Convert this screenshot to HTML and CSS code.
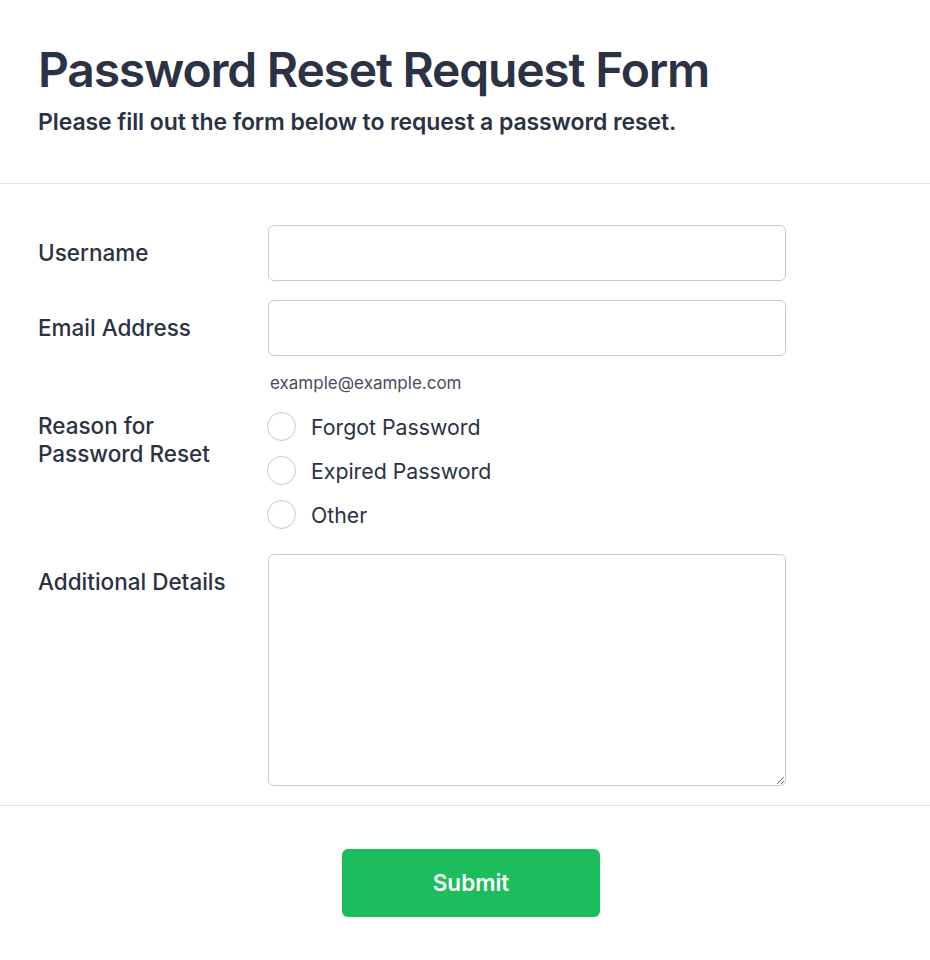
FILE: index.html
```html
<!DOCTYPE html>
<html lang="en">
  <head>
    <meta charset="UTF-8" />
    <meta name="viewport" content="width=device-width, initial-scale=1.0" />
    <title>Password Reset Request</title>
    <link rel="stylesheet" href="styles.css">
  </head>
  <body>
    <header class="form-header">
      <h1>Password Reset Request Form</h1>
      <p>Please fill out the form below to request a password reset.</p>
    </header>

    <form class="reset-form" onsubmit="return false">
      <div class="fields">
        <div class="field">
          <label class="field-label" for="username">Username</label>
          <div class="field-control">
            <input type="text" id="username" name="username" />
          </div>
        </div>

        <div class="field">
          <label class="field-label" for="email">Email Address</label>
          <div class="field-control">
            <input type="email" id="email" name="email" />
            <div class="hint">example@example.com</div>
          </div>
        </div>

        <div class="field radio-field">
          <span class="field-label">Reason for<br />Password Reset</span>
          <div class="field-control radio-list">
            <label class="radio"><input type="radio" name="reason" value="forgot" /> Forgot Password</label>
            <label class="radio"><input type="radio" name="reason" value="expired" /> Expired Password</label>
            <label class="radio"><input type="radio" name="reason" value="other" /> Other</label>
          </div>
        </div>

        <div class="field">
          <label class="field-label" for="details">Additional Details</label>
          <div class="field-control">
            <textarea id="details" name="details"></textarea>
          </div>
        </div>
      </div>

      <div class="form-actions">
        <button type="submit">Submit</button>
      </div>
    </form>
  </body>
</html>
```

FILE: styles.css
```css
body {
  margin: 0;
  font-family: "Inter", "Liberation Sans", sans-serif;
  background-color: #fff;
  color: #2a3243;
}

.form-header {
  padding: 41px 38px 47px;
  border-bottom: 1px solid #e2e3e8;
}

.form-header h1 {
  margin: 0;
  font-size: 48px;
  line-height: 1.2;
  font-weight: 600;
  letter-spacing: -0.025em;
}

.form-header p {
  margin: 9px 0 0;
  font-size: 23px;
  line-height: 28px;
  font-weight: 600;
  letter-spacing: -0.004em;
}

.fields {
  padding: 41px 38px 19px;
  border-bottom: 1px solid #e2e3e8;
}

.field {
  display: grid;
  grid-template-columns: 230px 518px;
  margin-bottom: 19px;
}

.field:last-child {
  margin-bottom: 0;
}

.field-label {
  padding-top: 14px;
  font-size: 22.5px;
  line-height: 28px;
  font-weight: 500;
}

.radio-field {
  margin-bottom: 25px;
}

.radio-field .field-label {
  padding-top: 0;
}

.field-control input[type="text"],
.field-control input[type="email"],
.field-control textarea {
  display: block;
  width: 100%;
  box-sizing: border-box;
  border: 1px solid #c6c9d6;
  border-radius: 6px;
  font-family: inherit;
  font-size: 18px;
  padding: 0 14px;
  background: #fff;
}

.field-control input[type="text"],
.field-control input[type="email"] {
  height: 56px;
}

.field-control textarea {
  height: 232px;
  padding: 12px 14px;
}

.hint {
  margin-top: 17px;
  padding-left: 2px;
  font-size: 17px;
  line-height: 20px;
  color: #464d5c;
}

.radio-list {
  display: flex;
  flex-direction: column;
  gap: 16px;
  padding-top: 1px;
}

.radio {
  display: flex;
  align-items: center;
  gap: 15px;
  height: 28px;
  font-size: 21.3px;
  line-height: 28px;
}

.radio input {
  appearance: none;
  margin: 0 0 0 -1px;
  width: 29px;
  height: 29px;
  border: 1.5px solid #c6c9d6;
  border-radius: 50%;
  background: #fff;
  flex-shrink: 0;
}

.form-actions {
  display: flex;
  justify-content: center;
  padding: 43px 26px 0 38px;
}

.form-actions button {
  width: 258px;
  height: 68px;
  border: none;
  border-radius: 6px;
  background-color: #1bbd5d;
  color: #fff;
  font-family: inherit;
  font-size: 22.5px;
  font-weight: 600;
  cursor: pointer;
}
```
